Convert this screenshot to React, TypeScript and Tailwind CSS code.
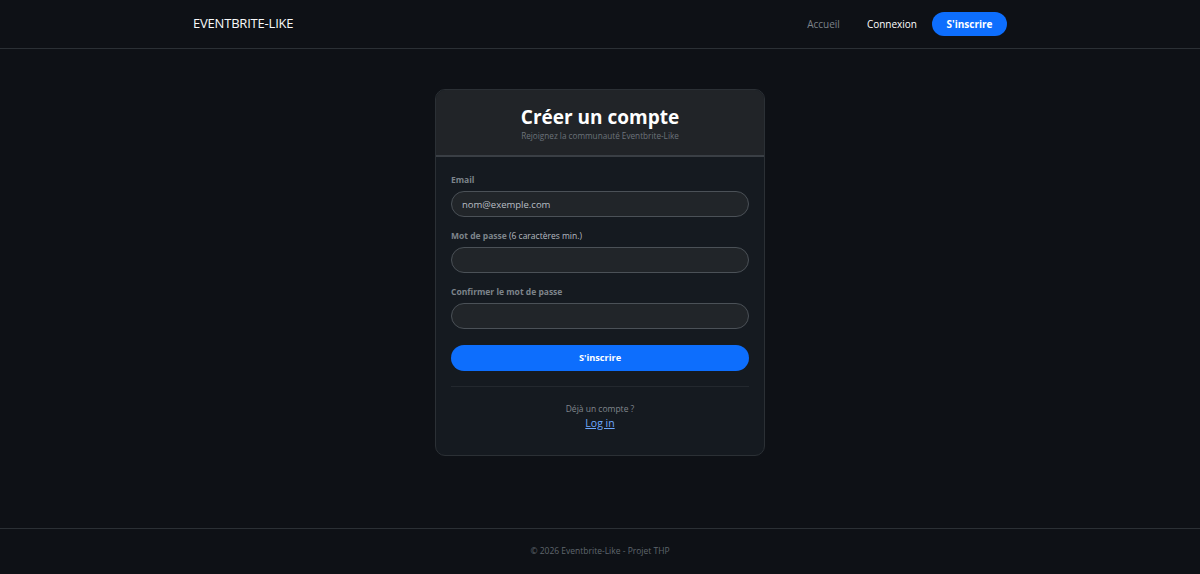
export default function App() {
  return (
    <div
      className="flex h-[574px] flex-col bg-[#0e1116] text-white"
      style={{ fontFamily: '"Open Sans", "Noto Sans", sans-serif' }}
    >
      {/* Navbar */}
      <nav className="h-[49px] shrink-0 border-b border-[#2b3035]">
        <div className="mx-auto flex h-full w-[814px] items-center justify-between">
          <span className="text-[13px] tracking-[-0.2px] text-[#f8f9fa]">EVENTBRITE-LIKE</span>
          <div className="flex items-center">
            <a className="text-[10px] text-[#7d838a]">Accueil</a>
            <a className="ml-[27px] text-[10px] text-white">Connexion</a>
            <button className="ml-[15px] h-[24px] w-[75px] rounded-full bg-[#0d6efd] text-[10px] font-bold text-white">
              S'inscrire
            </button>
          </div>
        </div>
      </nav>

      {/* Main */}
      <main className="flex flex-1 justify-center pt-[40px]">
        <div className="h-[367px] w-[330px] overflow-hidden rounded-[10px] border border-[#2b3035] bg-[#151a20]">
          <div className="flex h-[67px] flex-col items-center justify-center border-b-2 border-[#3a3f45] bg-[#212428]">
            <h1 className="text-[19px] font-bold leading-[24px] text-white">Créer un compte</h1>
            <p className="mt-[2px] text-[8.2px] leading-[10px] text-[#6c737a]">
              Rejoignez la communauté Eventbrite-Like
            </p>
          </div>

          <form className="px-[15px] pt-[17px]">
            <label className="block text-[8.5px] font-bold leading-[12px] text-[#7d848b]">Email</label>
            <input
              placeholder="nom@exemple.com"
              className="mt-[5px] block h-[26px] w-full rounded-full border border-[#4b5157] bg-[#212529] px-[10px] text-[9.5px] text-white placeholder:text-[#b8bec4] outline-none"
            />

            <label className="mt-[13px] block text-[8.5px] leading-[12px] text-[#7d848b]">
              <span className="font-bold">Mot de passe</span>{" "}
              <span className="text-[#b5bbc1]">(6 caractères min.)</span>
            </label>
            <input
              type="password"
              className="mt-[5px] block h-[26px] w-full rounded-full border border-[#4b5157] bg-[#212529] px-[10px] text-[11px] outline-none"
            />

            <label className="mt-[13px] block text-[8.5px] font-bold leading-[12px] text-[#7d848b]">
              Confirmer le mot de passe
            </label>
            <input
              type="password"
              className="mt-[5px] block h-[26px] w-full rounded-full border border-[#4b5157] bg-[#212529] px-[10px] text-[11px] outline-none"
            />

            <button
              type="button"
              className="mt-[16px] block h-[26px] w-full rounded-full bg-[#0d6efd] text-[9.2px] font-bold text-white"
            >
              S'inscrire
            </button>

            <div className="mt-[15px] border-t border-[#23282e]" />

            <div className="pt-[16px] text-center">
              <p className="text-[8.5px] leading-[12px] text-[#80868d]">Déjà un compte ?</p>
              <a className="mt-[1px] block text-[10.5px] leading-[14px] text-[#6ea8fe] underline">Log in</a>
            </div>
          </form>
        </div>
      </main>

      {/* Footer */}
      <footer className="flex h-[46px] shrink-0 items-center justify-center border-t border-[#2b3035]">
        <p className="text-[8.5px] text-[#5f666d]">© 2026 Eventbrite-Like - Projet THP</p>
      </footer>
    </div>
  );
}
